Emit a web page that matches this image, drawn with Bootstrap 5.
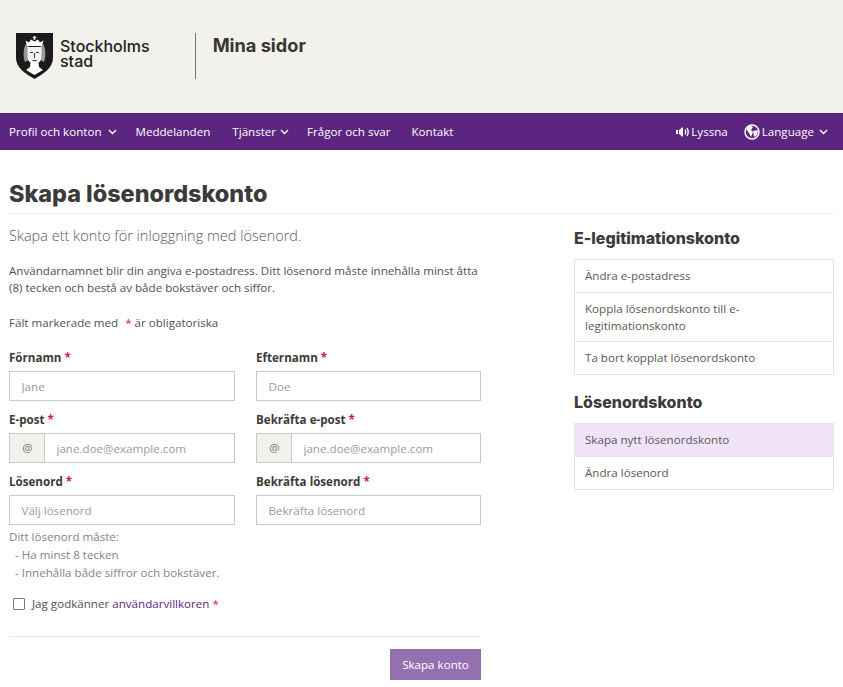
<!DOCTYPE html>
<html lang="sv"><head><meta charset="utf-8"><title>Skapa lösenordskonto</title>
<link href="https://cdn.jsdelivr.net/npm/bootstrap@5.3.0/dist/css/bootstrap.min.css" rel="stylesheet">
<style>
html,body{height:687px;overflow:hidden}
body{font-family:"Open Sans",sans-serif;font-size:11.6px;color:#55504f;background:#fff;line-height:18px}
.sth-top{height:113px;background:#f3f1ec;padding:33px 0 0 16px}
.sth-logo-text{font-family:"Inter",sans-serif;font-size:16px;font-weight:500;line-height:15px;color:#222;margin-left:7px;margin-top:6px}
.sth-div{width:1px;height:46px;background:#77736f;margin:0 0 0 45px}
.sth-brand{font-family:"Inter",sans-serif;font-weight:700;font-size:18.200px;line-height:24px;color:#383634;margin:0 0 0 17px}
.sth-nav{height:37px;background:#5b2580;color:#fff;padding:0 15px 0 9px}
.sth-nav a{color:#fff;text-decoration:none;white-space:nowrap}
.sth-gap-a{margin-left:19px}.sth-gap-b{margin-left:21px}.sth-gap-c{margin-left:18px}
.sth-gap-d{margin-left:22px}
.sth-chev-a{margin-left:6px}
.sth-chev-b{margin-left:5px}
.sth-tight{margin-left:1px}
.sth-lang{margin-left:2px}
.sth-main{padding:28px 9px 0}
h1.sth-h1{font-family:"Inter",sans-serif;font-weight:800;font-size:23.400px;line-height:32px;color:#3d3a39;margin:0;padding-bottom:3px;border-bottom:1px solid #eee}
.sth-lead{font-size:14.500px;font-weight:300;line-height:20px;color:#5c5856;margin:12px 0 16px}
.sth-left{width:472px}
.sth-right{width:260px;margin-left:93px;padding-top:13px}
.sth-p{margin:0 0 18px;line-height:17px}
.sth-cols{display:grid;grid-template-columns:226px 225px;column-gap:21px;row-gap:10px;margin-top:17px}
.sth-label{font-weight:700;color:#3d3a39;margin-bottom:4px;display:block;line-height:18px}
.sth-req{color:#d6193f}
.form-control.sth-in{height:30px;border-radius:0;border:1px solid #c9c9c9;font-size:11.6px;padding:0 12px 0 11.500px;color:#555}
.form-control.sth-in::placeholder{color:#9b9b9b}
.input-group-text.sth-at{border-radius:0;background:#f3f1ec;border:1px solid #c9c9c9;border-right:0;width:36px;height:30px;padding:0;justify-content:center;font-size:11.6px;color:#777}
.sth-help{color:#88847f;margin-top:3px}
.sth-help div:not(:first-child){padding-left:6px}
.sth-check{display:flex;align-items:center;margin:13px 0 0 4px}
.sth-box{width:12px;height:12px;border:1.500px solid #777;border-radius:1px;margin:0 7px 0 0;appearance:none;background:#fff}
.sth-check a{color:#5b2580;text-decoration:none}
.sth-hr{border:0;border-top:1px solid #e8e8e8;opacity:1;margin:23px 0 12px}
.btn.sth-btn{background:#9570b1;border:0;border-radius:0;color:#fff;font-size:11.6px;height:31px;width:91px;padding:0}
h2.sth-h2{font-family:"Inter",sans-serif;font-weight:800;font-size:16px;line-height:22px;color:#3d3a39;margin:0 0 10px}
.list-group.sth-list{border-radius:0;margin-bottom:16px}
.sth-list .list-group-item{border-radius:0;border-color:#e5e5e5;padding:7px 10px;font-size:11.6px;line-height:18px;color:#5c5856;text-decoration:none}
.sth-list .sth-two{line-height:17px}
.sth-list .list-group-item.sth-active{background:#efe4fa}
</style></head>
<body>
<header class="sth-top d-flex">
  <svg width="37" height="46" viewBox="0 0 37 46" aria-hidden="true">
    <path d="M0 0H37V25C37 35 27 41 18.500 46C10 41 0 35 0 25Z" fill="#1b1b1b"/>
    <path d="M11 13L9.500 7.500L13 9.500L15 6.500L18.500 8.500L22 6.500L24 9.500L27.500 7.500L26 13Z" fill="#fff"/>
    <path d="M18.500 3V7M16.800 4.500H20.200" stroke="#fff" stroke-width="1.300"/>
    <path d="M10 11C7 15 7 24 9 29L13 27L13 14ZM27 11C30 15 30 24 28 29L24 27L24 14Z" fill="#fff" opacity=".55"/>
    <path d="M11.500 14H25.500V23C25.500 28 22.500 31 18.500 31C14.500 31 11.500 28 11.500 23Z" fill="#f2f2f2"/>
    <path d="M14.500 30H22.500L23 34L27 37L18.500 42L10 37L14 34Z" fill="#fff"/>
    <path d="M14 19.500H17M20 19.500H23M18.500 20V25M16.500 27.500H20.500" stroke="#333" stroke-width="1" fill="none"/>
  </svg>
  <div class="sth-logo-text">Stockholms<br>stad</div>
  <div class="sth-div"></div>
  <div class="sth-brand">Mina sidor</div>
</header>
<nav class="sth-nav d-flex align-items-center">
  <a href="#">Profil och konton</a>
  <svg class="sth-chev-a" width="9" height="6" viewBox="0 0 9 6"><path d="M1 1L4.500 4.500L8 1" fill="none" stroke="#fff" stroke-width="1.400"/></svg>
  <a href="#" class="sth-gap-a">Meddelanden</a>
  <a href="#" class="sth-gap-d">Tjänster</a>
  <svg class="ms-1" width="9" height="6" viewBox="0 0 9 6"><path d="M1 1L4.500 4.500L8 1" fill="none" stroke="#fff" stroke-width="1.400"/></svg>
  <a href="#" class="sth-gap-c">Frågor och svar</a>
  <a href="#" class="sth-gap-b">Kontakt</a>
  <svg class="ms-auto" width="14" height="12" viewBox="0 0 14 12"><path d="M0 4H2V8H0ZM3 4L7 1V11L3 8Z" fill="#fff"/><path d="M9 3.500Q10.500 6 9 8.500M11 2Q13.500 6 11 10" fill="none" stroke="#fff" stroke-width="1.300"/></svg>
  <a href="#" class="sth-tight">Lyssna</a>
  <svg class="ms-3" width="16" height="16" viewBox="0 0 16 16"><circle cx="8" cy="8" r="7" fill="#5b2580" stroke="#fff" stroke-width="1.500"/><path d="M2 5L6 1.500L9 3L7 6L9 8L7 13L5 9ZM9 7L14 6L13 11L10 13Z" fill="#fff"/></svg>
  <a href="#" class="sth-lang">Language</a>
  <svg class="sth-chev-b" width="9" height="6" viewBox="0 0 9 6"><path d="M1 1L4.500 4.500L8 1" fill="none" stroke="#fff" stroke-width="1.400"/></svg>
</nav>
<main class="sth-main">
  <h1 class="sth-h1">Skapa lösenordskonto</h1>
  <div class="d-flex">
    <div class="sth-left">
      <p class="sth-lead">Skapa ett konto för inloggning med lösenord.</p>
      <p class="sth-p">Användarnamnet blir din angiva e-postadress. Ditt lösenord måste innehålla minst åtta (8) tecken och bestå av både bokstäver och siffor.</p>
      <div>Fält markerade med <span class="sth-req ms-1">*</span> är obligatoriska</div>
      <div class="sth-cols">
        <div><label class="sth-label">Förnamn <span class="sth-req">*</span></label><input class="form-control sth-in" placeholder="Jane"></div>
        <div><label class="sth-label">Efternamn <span class="sth-req">*</span></label><input class="form-control sth-in" placeholder="Doe"></div>
        <div><label class="sth-label">E-post <span class="sth-req">*</span></label><div class="input-group flex-nowrap"><span class="input-group-text sth-at">@</span><input class="form-control sth-in" placeholder="jane.doe@example.com"></div></div>
        <div><label class="sth-label">Bekräfta e-post <span class="sth-req">*</span></label><div class="input-group flex-nowrap"><span class="input-group-text sth-at">@</span><input class="form-control sth-in" placeholder="jane.doe@example.com"></div></div>
        <div><label class="sth-label">Lösenord <span class="sth-req">*</span></label><input class="form-control sth-in" placeholder="Välj lösenord"></div>
        <div><label class="sth-label">Bekräfta lösenord <span class="sth-req">*</span></label><input class="form-control sth-in" placeholder="Bekräfta lösenord"></div>
      </div>
      <div class="sth-help"><div>Ditt lösenord måste:</div><div>- Ha minst 8 tecken</div><div>- Innehålla både siffror och bokstäver.</div></div>
      <label class="sth-check"><input type="checkbox" class="sth-box"><span>Jag godkänner <a href="#">användarvillkoren</a> <span class="sth-req">*</span></span></label>
      <hr class="sth-hr">
      <div class="d-flex justify-content-end"><button class="btn sth-btn">Skapa konto</button></div>
    </div>
    <aside class="sth-right">
      <h2 class="sth-h2">E-legitimationskonto</h2>
      <div class="list-group sth-list">
        <a class="list-group-item" href="#">Ändra e-postadress</a>
        <a class="list-group-item sth-two" href="#">Koppla lösenordskonto till e-legitimationskonto</a>
        <a class="list-group-item" href="#">Ta bort kopplat lösenordskonto</a>
      </div>
      <h2 class="sth-h2">Lösenordskonto</h2>
      <div class="list-group sth-list">
        <a class="list-group-item sth-active" href="#">Skapa nytt lösenordskonto</a>
        <a class="list-group-item" href="#">Ändra lösenord</a>
      </div>
    </aside>
  </div>
</main>
</body></html>
